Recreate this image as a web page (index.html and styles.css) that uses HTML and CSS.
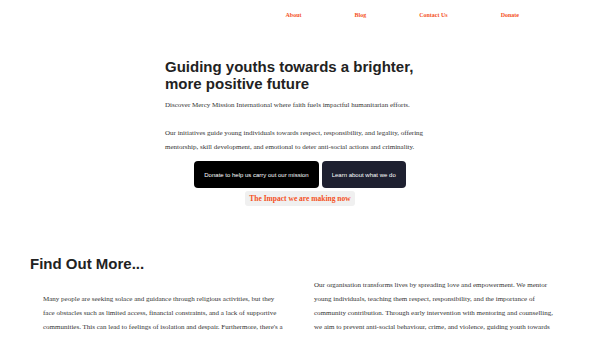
FILE: index.html
```html
<!DOCTYPE html>
<html lang="en">
<head>
    <meta charset="UTF-8">
    <meta name="viewport" content="width=device-width, initial-scale=1.0">
    <title>Mercy Mission International</title>
    <link rel="stylesheet" href="styles.css">
</head>
<body>
    <nav class="nav">
        <a href="#">About</a>
        <a href="#">Blog</a>
        <a href="#">Contact Us</a>
        <a href="#">Donate</a>
    </nav>

    <section class="hero">
        <h1>Guiding youths towards a brighter, more positive future</h1>
        <p>Discover Mercy Mission International where faith fuels impactful humanitarian efforts.</p>
        <p class="spaced">Our initiatives guide young individuals towards respect, responsibility, and legality, offering mentorship, skill development, and emotional to deter anti-social actions and criminality.</p>
        <div class="actions">
            <button class="btn">Donate to help us carry out our mission</button>
            <button class="btn dark">Learn about what we do</button>
        </div>
        <div class="impact"><span>The Impact we are making now</span></div>
    </section>

    <section class="more">
        <h2>Find Out More...</h2>
        <div class="cols">
            <p class="col left">Many people are seeking solace and guidance through religious activities, but they face obstacles such as limited access, financial constraints, and a lack of supportive communities. This can lead to feelings of isolation and despair. Furthermore, there's a growing need to reach out to young people who may be drawn into anti-social behaviour.</p>
            <p class="col right">Our organisation transforms lives by spreading love and empowerment. We mentor young individuals, teaching them respect, responsibility, and the importance of community contribution. Through early intervention with mentoring and counselling, we aim to prevent anti-social behaviour, crime, and violence, guiding youth towards a responsible, caring future.</p>
        </div>
    </section>
</body>
</html>
```

FILE: styles.css
```css
* {
    margin: 0;
    padding: 0;
    box-sizing: border-box;
}

body {
    font-family: "Liberation Serif", "Times New Roman", serif;
    background: white;
    color: #333;
    overflow: hidden;
    height: 338px;
}

.nav {
    display: flex;
    justify-content: flex-end;
    gap: 53px;
    padding: 12px 81px 0 0;
    height: 40px;
}

.nav a {
    color: #f4511e;
    font-weight: bold;
    font-size: 6px;
    text-decoration: none;
}

.hero {
    width: 270px;
    margin: 18px auto 0;
}

.hero h1 {
    font-family: "Liberation Sans", Arial, sans-serif;
    font-size: 15px;
    line-height: 17px;
    color: #222;
    margin-bottom: 6px;
}

.hero p {
    font-size: 7px;
    line-height: 14px;
    color: #333;
}

.hero p.spaced {
    margin-top: 14px;
}

.actions {
    display: flex;
    justify-content: center;
    gap: 3px;
    margin-top: 7px;
}

.btn {
    font-family: "Liberation Sans", Arial, sans-serif;
    font-size: 6px;
    color: white;
    background: #000;
    border: none;
    border-radius: 4px;
    height: 27px;
    padding: 0 10px;
}

.btn.dark {
    background: #1e2030;
}

.impact {
    display: flex;
    justify-content: center;
    margin-top: 3px;
}

.impact span {
    background: #f0f0f0;
    color: #f4511e;
    font-weight: bold;
    font-size: 7.5px;
    padding: 3px 4px;
    border-radius: 3px;
}

.more {
    padding: 0 30px;
    margin-top: 49px;
}

.more h2 {
    font-family: "Liberation Sans", Arial, sans-serif;
    font-size: 15px;
    color: #222;
}

.cols {
    display: grid;
    grid-template-columns: 1fr 1fr;
    gap: 2px;
}

.col {
    font-size: 7px;
    line-height: 14px;
    padding: 0 13px;
    margin-top: 6px;
}

.col.left {
    margin-top: 20px;
}

.col.right {
    padding-right: 17px;
}
```
